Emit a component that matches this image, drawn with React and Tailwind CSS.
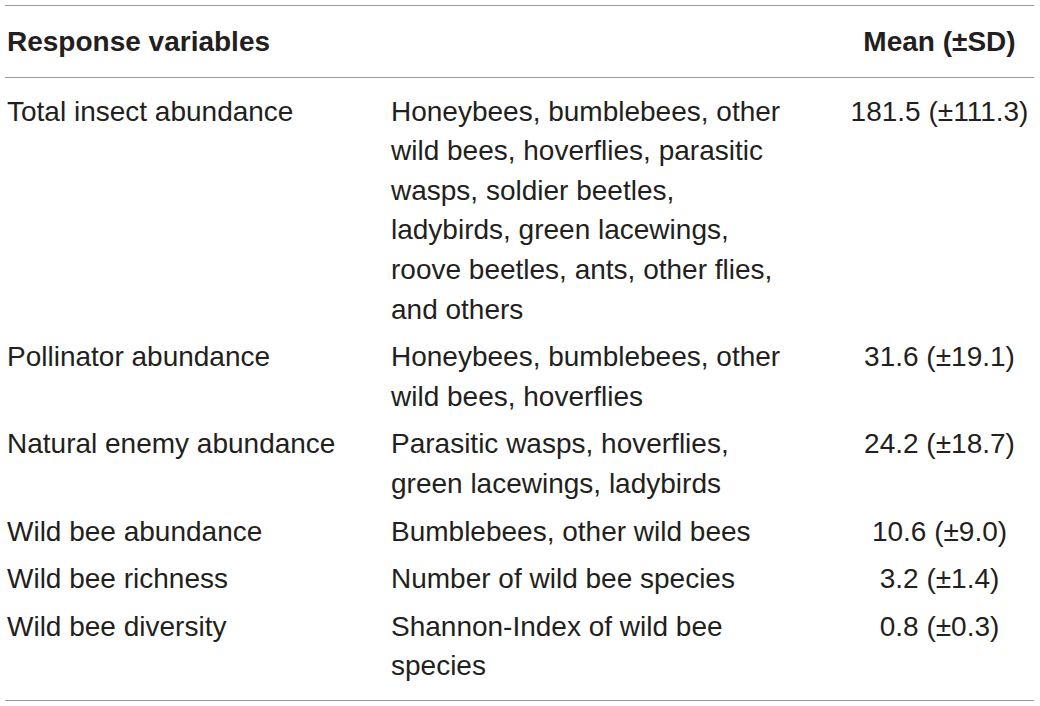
const rows = [
  {
    name: 'Total insect abundance',
    desc: [
      'Honeybees, bumblebees, other',
      'wild bees, hoverflies, parasitic',
      'wasps, soldier beetles,',
      'ladybirds, green lacewings,',
      'roove beetles, ants, other flies,',
      'and others',
    ],
    mean: '181.5 (±111.3)',
  },
  {
    name: 'Pollinator abundance',
    desc: ['Honeybees, bumblebees, other', 'wild bees, hoverflies'],
    mean: '31.6 (±19.1)',
  },
  {
    name: 'Natural enemy abundance',
    desc: ['Parasitic wasps, hoverflies,', 'green lacewings, ladybirds'],
    mean: '24.2 (±18.7)',
  },
  {
    name: 'Wild bee abundance',
    desc: ['Bumblebees, other wild bees'],
    mean: '10.6 (±9.0)',
  },
  {
    name: 'Wild bee richness',
    desc: ['Number of wild bee species'],
    mean: '3.2 (±1.4)',
  },
  {
    name: 'Wild bee diversity',
    desc: ['Shannon-Index of wild bee', 'species'],
    mean: '0.8 (±0.3)',
  },
];

export default function App() {
  return (
    <div
      className="w-[1040px] h-[706px] bg-white pt-[5px] pl-[5px] pr-[6px] text-[#231f20] text-[28px] leading-[39.6px]"
      style={{ fontFamily: '"Liberation Sans", Arial, Helvetica, sans-serif' }}
    >
      <div className="border-t border-b border-[#9a9a9a]">
        {/* header */}
        <div className="grid grid-cols-[384px_456px_1fr] pt-[16px] pb-[15px] border-b border-[#9a9a9a] font-bold">
          <div className="pl-[2px] whitespace-nowrap">Response variables</div>
          <div />
          <div className="text-center whitespace-nowrap">Mean (±SD)</div>
        </div>

        {/* body */}
        <div className="pt-[10px] pb-[10px]">
          {rows.map((r) => (
            <div key={r.name} className="grid grid-cols-[384px_456px_1fr] py-[4px]">
              <div className="pl-[2px] whitespace-nowrap">{r.name}</div>
              <div className="pl-[2px]">
                {r.desc.map((line) => (
                  <div key={line} className="whitespace-nowrap">{line}</div>
                ))}
              </div>
              <div className="text-center whitespace-nowrap">{r.mean}</div>
            </div>
          ))}
        </div>
      </div>
    </div>
  );
}
